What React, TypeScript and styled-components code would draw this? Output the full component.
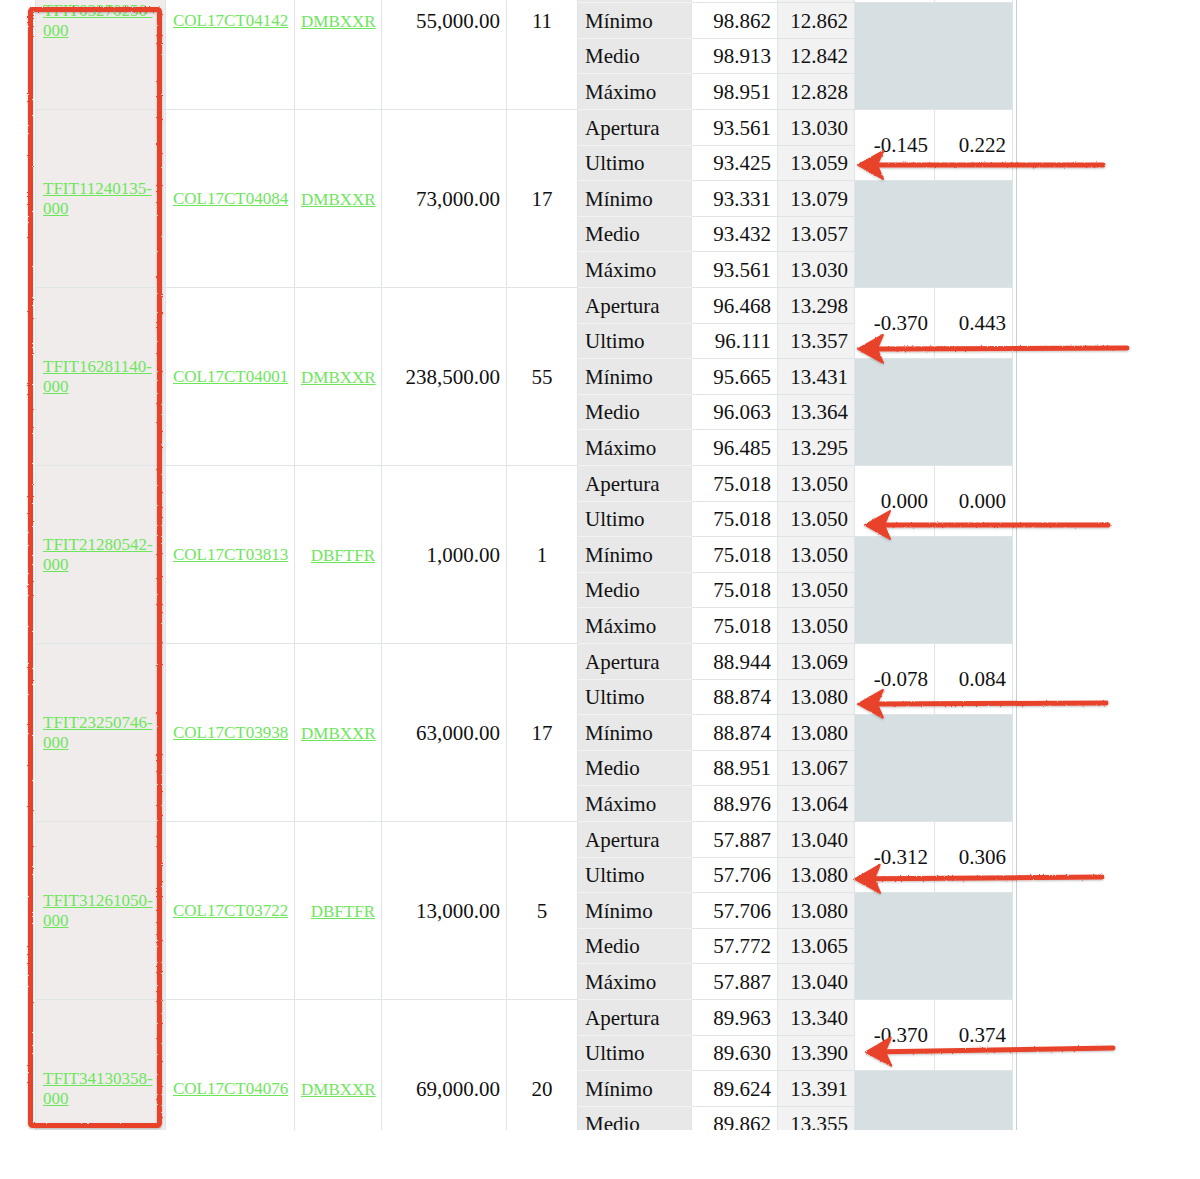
import React from 'react';
import styled, { createGlobalStyle } from 'styled-components';

const Global = createGlobalStyle`
  html, body { margin: 0; padding: 0; background: #ffffff; }
  body { font-family: "Liberation Serif", "Times New Roman", serif; }
`;

const Viewport = styled.div`
  position: relative;
  height: 1130px;
  overflow: hidden;
`;

const Frame = styled.div`
  display: flow-root;
  margin-left: 35px;
  width: 977px;
  height: 100%;
  padding-right: 4px;
  border-right: 1px solid #c8cdd1;
`;

const Table = styled.table`
  margin-top: -69px;
  border-collapse: collapse;
  table-layout: fixed;
  width: 977px;
  font-size: 21px;
  color: #111;
`;

const Row = styled.tr<{ $h: number }>`
  height: ${(p) => p.$h}px;
`;

type Kind = 'id' | 'code' | 'amount' | 'count' | 'label' | 'value' | 'yield' | 'change' | 'blank';

const Cell = styled.td<{ $kind: Kind }>`
  border: 1px solid #dfe4e7;
  vertical-align: middle;
  padding: 0 6px;
  white-space: nowrap;
  line-height: 24px;
  background: ${(p) =>
    p.$kind === 'id'
      ? '#f0ecec'
      : p.$kind === 'label'
      ? '#e8e8e8'
      : p.$kind === 'yield'
      ? '#f2f2f2'
      : p.$kind === 'blank'
      ? '#d6e0e3'
      : '#ffffff'};
  text-align: ${(p) =>
    p.$kind === 'id' || p.$kind === 'code' || p.$kind === 'label'
      ? 'left'
      : p.$kind === 'count'
      ? 'center'
      : 'right'};
  ${(p) =>
    p.$kind === 'id'
      ? 'white-space: normal; padding: 0 7px; line-height: 20px; font-size: 17px;'
      : ''}
  ${(p) => (p.$kind === 'code' ? 'padding: 0 6px 0 7px; font-size: 17px;' : '')}
  ${(p) => (p.$kind === 'label' ? 'padding-left: 7px; border-color: #f3f3f3 #dfe4e7;' : '')}
`;

const Link = styled.a`
  color: #6ee65c;
  text-decoration: underline;
  font-size: 17px;
`;

const Overlay = styled.svg`
  position: absolute;
  left: 0;
  top: 0;
  pointer-events: none;
`;

type Group = {
  id: string;
  code: string;
  plan: string;
  amount: string;
  count: string;
  rows: [string, string][];
  change: [string, string];
};

const LABELS = ['Apertura', 'Ultimo', 'Mínimo', 'Medio', 'Máximo'];
const HEIGHTS = [36, 35, 36, 35, 36];

const groups: Group[] = [
  {
    id: 'TFIT03270250-000',
    code: 'COL17CT04142',
    plan: 'DMBXXR',
    amount: '55,000.00',
    count: '11',
    rows: [
      ['98.951', '12.828'],
      ['98.862', '12.862'],
      ['98.862', '12.862'],
      ['98.913', '12.842'],
      ['98.951', '12.828'],
    ],
    change: ['-0.089', '0.034'],
  },
  {
    id: 'TFIT11240135-000',
    code: 'COL17CT04084',
    plan: 'DMBXXR',
    amount: '73,000.00',
    count: '17',
    rows: [
      ['93.561', '13.030'],
      ['93.425', '13.059'],
      ['93.331', '13.079'],
      ['93.432', '13.057'],
      ['93.561', '13.030'],
    ],
    change: ['-0.145', '0.222'],
  },
  {
    id: 'TFIT16281140-000',
    code: 'COL17CT04001',
    plan: 'DMBXXR',
    amount: '238,500.00',
    count: '55',
    rows: [
      ['96.468', '13.298'],
      ['96.111', '13.357'],
      ['95.665', '13.431'],
      ['96.063', '13.364'],
      ['96.485', '13.295'],
    ],
    change: ['-0.370', '0.443'],
  },
  {
    id: 'TFIT21280542-000',
    code: 'COL17CT03813',
    plan: 'DBFTFR',
    amount: '1,000.00',
    count: '1',
    rows: [
      ['75.018', '13.050'],
      ['75.018', '13.050'],
      ['75.018', '13.050'],
      ['75.018', '13.050'],
      ['75.018', '13.050'],
    ],
    change: ['0.000', '0.000'],
  },
  {
    id: 'TFIT23250746-000',
    code: 'COL17CT03938',
    plan: 'DMBXXR',
    amount: '63,000.00',
    count: '17',
    rows: [
      ['88.944', '13.069'],
      ['88.874', '13.080'],
      ['88.874', '13.080'],
      ['88.951', '13.067'],
      ['88.976', '13.064'],
    ],
    change: ['-0.078', '0.084'],
  },
  {
    id: 'TFIT31261050-000',
    code: 'COL17CT03722',
    plan: 'DBFTFR',
    amount: '13,000.00',
    count: '5',
    rows: [
      ['57.887', '13.040'],
      ['57.706', '13.080'],
      ['57.706', '13.080'],
      ['57.772', '13.065'],
      ['57.887', '13.040'],
    ],
    change: ['-0.312', '0.306'],
  },
  {
    id: 'TFIT34130358-000',
    code: 'COL17CT04076',
    plan: 'DMBXXR',
    amount: '69,000.00',
    count: '20',
    rows: [
      ['89.963', '13.340'],
      ['89.630', '13.390'],
      ['89.624', '13.391'],
      ['89.862', '13.355'],
      ['89.963', '13.340'],
    ],
    change: ['-0.370', '0.374'],
  },
];

const COLS = [130, 129, 87, 125, 71, 114, 86, 77, 80, 78];

const ARROWS: { tip: [number, number]; tail: [number, number] }[] = [
  { tip: [858, 165], tail: [1103, 165] },
  { tip: [858, 349], tail: [1127, 348] },
  { tip: [865, 525], tail: [1108, 525] },
  { tip: [858, 704], tail: [1106, 703] },
  { tip: [855, 879], tail: [1102, 877] },
  { tip: [866, 1052], tail: [1113, 1048] },
];

const RED = '#e8432c';

function Arrow({ tip, tail }: { tip: [number, number]; tail: [number, number] }) {
  const dx = tail[0] - tip[0];
  const dy = tail[1] - tip[1];
  const len = Math.hypot(dx, dy);
  const ux = dx / len;
  const uy = dy / len;
  const px = -uy;
  const py = ux;
  const headLen = 25;
  const half = 14;
  const b1 = [tip[0] + ux * headLen + px * half, tip[1] + uy * headLen + py * half];
  const b2 = [tip[0] + ux * headLen - px * half, tip[1] + uy * headLen - py * half];
  const notch = [tip[0] + ux * 19, tip[1] + uy * 19];
  return (
    <g>
      <line
        x1={notch[0]}
        y1={notch[1]}
        x2={tail[0]}
        y2={tail[1]}
        stroke={RED}
        strokeWidth={5}
        strokeLinecap="round"
      />
      <polygon
        points={`${tip[0]},${tip[1]} ${b1[0]},${b1[1]} ${notch[0]},${notch[1]} ${b2[0]},${b2[1]}`}
        fill={RED}
        stroke={RED}
        strokeWidth={2}
        strokeLinejoin="round"
      />
    </g>
  );
}

function GroupRows({ g }: { g: Group }) {
  return (
    <>
      {g.rows.map(([v, y], i) => (
        <Row key={i} $h={HEIGHTS[i]}>
          {i === 0 && (
            <>
              <Cell $kind="id" rowSpan={5}>
                <Link href="#">{g.id}</Link>
              </Cell>
              <Cell $kind="code" rowSpan={5}>
                <Link href="#">{g.code}</Link>
              </Cell>
              <Cell $kind="amount" rowSpan={5}>
                <Link href="#">{g.plan}</Link>
              </Cell>
              <Cell $kind="amount" rowSpan={5}>
                {g.amount}
              </Cell>
              <Cell $kind="count" rowSpan={5}>
                {g.count}
              </Cell>
            </>
          )}
          <Cell $kind="label">{LABELS[i]}</Cell>
          <Cell $kind="value">{v}</Cell>
          <Cell $kind="yield">{y}</Cell>
          {i === 0 && (
            <>
              <Cell $kind="change" rowSpan={2}>
                {g.change[0]}
              </Cell>
              <Cell $kind="change" rowSpan={2}>
                {g.change[1]}
              </Cell>
            </>
          )}
          {i === 2 && <Cell $kind="blank" rowSpan={3} colSpan={2} />}
        </Row>
      ))}
    </>
  );
}

export default function App() {
  return (
    <>
      <Global />
      <Viewport>
        <Frame>
          <Table>
            <colgroup>
              {COLS.map((w, i) => (
                <col key={i} style={{ width: w }} />
              ))}
            </colgroup>
            <tbody>
              {groups.map((g) => (
                <GroupRows key={g.id} g={g} />
              ))}
            </tbody>
          </Table>
        </Frame>
        <Overlay width={1200} height={1130} viewBox="0 0 1200 1130">
          <defs>
            <filter id="rough" x="-5%" y="-5%" width="110%" height="110%">
              <feTurbulence type="fractalNoise" baseFrequency="0.9" numOctaves={2} seed={3} result="n" />
              <feDisplacementMap in="SourceGraphic" in2="n" scale={2.2} xChannelSelector="R" yChannelSelector="G" result="d" />
              <feDropShadow dx={0} dy={1} stdDeviation={1} floodColor="#000" floodOpacity={0.25} />
            </filter>
          </defs>
          <g filter="url(#rough)">
            <rect x={30.5} y={9.5} width={129} height={1116} fill="none" stroke={RED} strokeWidth={5} rx={2} />
            {ARROWS.map((a, i) => (
              <Arrow key={i} tip={a.tip} tail={a.tail} />
            ))}
          </g>
        </Overlay>
      </Viewport>
    </>
  );
}
